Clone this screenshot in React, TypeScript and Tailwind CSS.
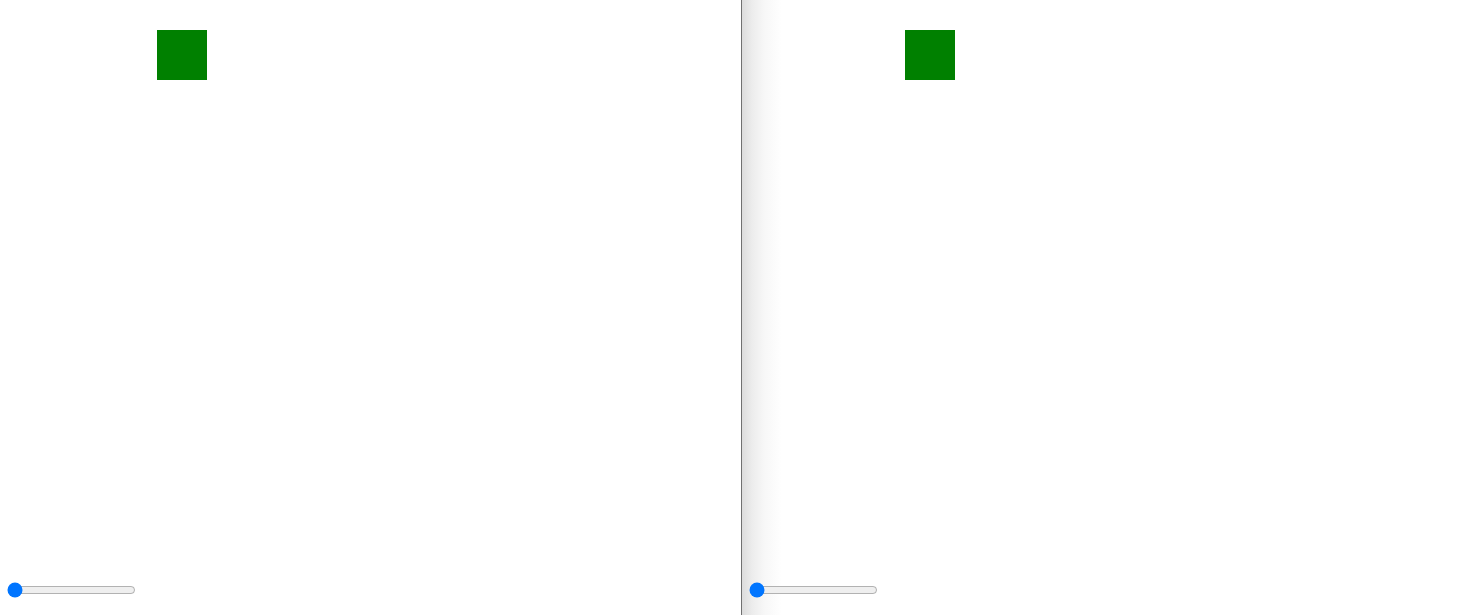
import React from "react";

function Pane({ squareLeft, withShadow }: { squareLeft: string; withShadow?: boolean }) {
  return (
    <div className="relative h-[615px] overflow-hidden bg-white">
      {withShadow && (
        <div className="pointer-events-none absolute left-0 top-0 bottom-0 w-[40px] bg-[linear-gradient(to_right,#dcdcdc,#ececec_25%,#f7f7f7_55%,rgba(255,255,255,0))]" />
      )}
      <div className={`relative h-[50px] w-[50px] bg-[#008000] mt-[30px] ${squareLeft}`} />
      <input
        type="range"
        defaultValue={0}
        min={0}
        max={100}
        className="absolute left-[5px] bottom-[15px] m-[2px] w-[129px] h-[16px] accent-[#0075ff]"
      />
    </div>
  );
}

export default function App() {
  return (
    <div className="flex h-[615px] w-[1475px] bg-white">
      <div className="w-[741px] shrink-0">
        <Pane squareLeft="ml-[156.5px]" />
      </div>
      <div className="flex-1 border-l border-[#707070]">
        <Pane squareLeft="ml-[162.5px]" withShadow />
      </div>
    </div>
  );
}
